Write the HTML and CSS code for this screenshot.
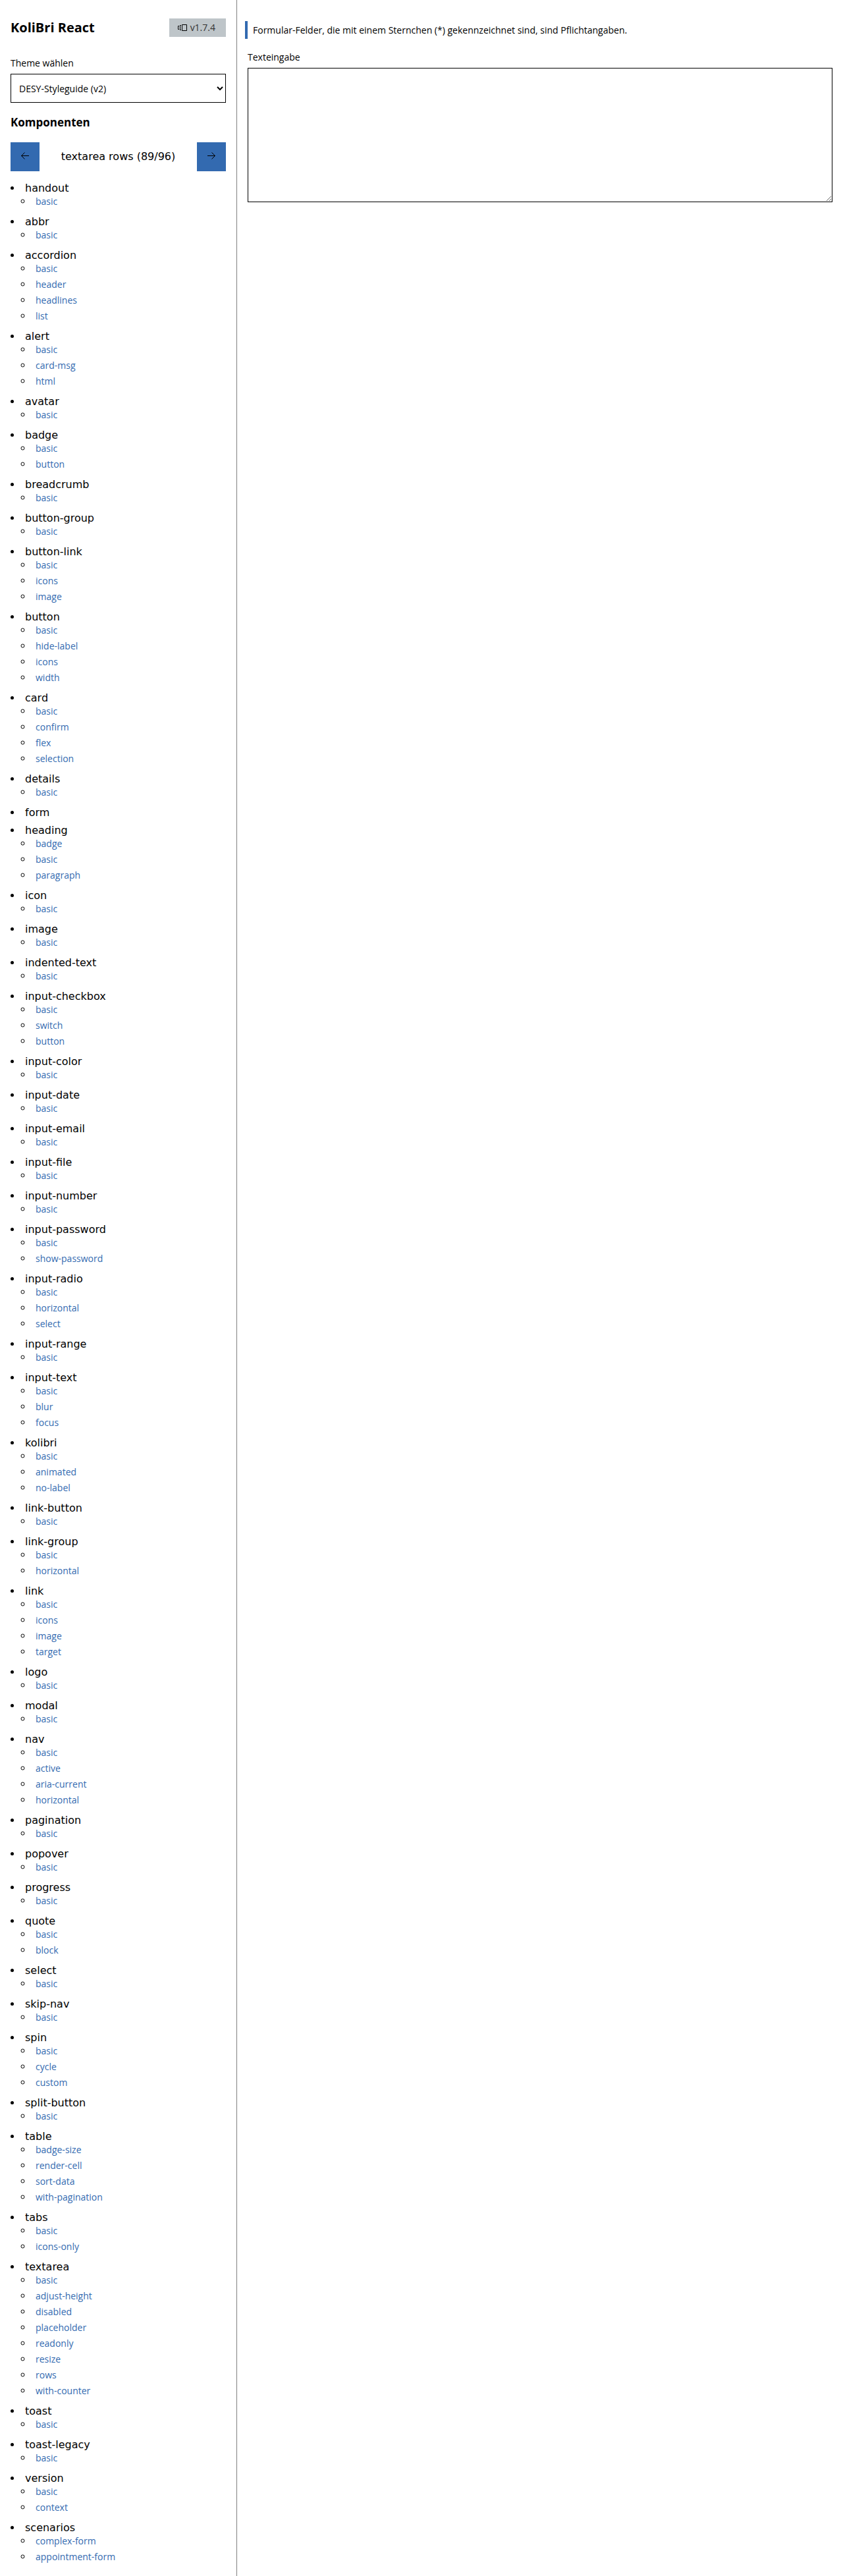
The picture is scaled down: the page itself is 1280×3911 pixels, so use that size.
FILE: index.html
```html
<!DOCTYPE html>
<html lang="de">
<head>
<meta charset="utf-8">
<meta name="viewport" content="width=device-width, initial-scale=1">
<title>KoliBri React</title>
<link rel="stylesheet" href="styles.css">
</head>
<body>
<div class="app">
<aside class="sidebar">
  <header class="brand">
    <h1 class="brand-title">KoliBri React</h1>
    <span class="badge">
      <svg class="icon" viewBox="0 0 16 16" aria-hidden="true"><path d="M7.5 3.5h7v9h-7zM6 4.500H4.500v7H6M3 5.500H1.500v5H3"/></svg>
      v1.7.4
    </span>
  </header>
  <div class="field">
    <label class="label" for="theme">Theme wählen</label>
    <select class="select" id="theme"><option>DESY-Styleguide (v2)</option></select>
  </div>
  <h2 class="section-title">Komponenten</h2>
  <div class="pager">
    <button class="pager-button" type="button" aria-label="Zurück"><svg class="icon" viewBox="0 0 16 16" aria-hidden="true"><path d="M14 8.500H2.500M7.500 3.500l-5 5 5 5"/></svg></button>
    <span class="pager-text">textarea rows (89/96)</span>
    <button class="pager-button" type="button" aria-label="Weiter"><svg class="icon" viewBox="0 0 16 16" aria-hidden="true"><path d="M2 8.500h11.500M8.500 3.500l5 5-5 5"/></svg></button>
  </div>
  <nav aria-label="Komponenten">
  <ul class="groups">
    <li>handout<ul><li><a href="#">basic</a></li></ul></li>
    <li>abbr<ul><li><a href="#">basic</a></li></ul></li>
    <li>accordion<ul><li><a href="#">basic</a></li><li><a href="#">header</a></li><li><a href="#">headlines</a></li><li><a href="#">list</a></li></ul></li>
    <li>alert<ul><li><a href="#">basic</a></li><li><a href="#">card-msg</a></li><li><a href="#">html</a></li></ul></li>
    <li>avatar<ul><li><a href="#">basic</a></li></ul></li>
    <li>badge<ul><li><a href="#">basic</a></li><li><a href="#">button</a></li></ul></li>
    <li>breadcrumb<ul><li><a href="#">basic</a></li></ul></li>
    <li>button-group<ul><li><a href="#">basic</a></li></ul></li>
    <li>button-link<ul><li><a href="#">basic</a></li><li><a href="#">icons</a></li><li><a href="#">image</a></li></ul></li>
    <li>button<ul><li><a href="#">basic</a></li><li><a href="#">hide-label</a></li><li><a href="#">icons</a></li><li><a href="#">width</a></li></ul></li>
    <li>card<ul><li><a href="#">basic</a></li><li><a href="#">confirm</a></li><li><a href="#">flex</a></li><li><a href="#">selection</a></li></ul></li>
    <li>details<ul><li><a href="#">basic</a></li></ul></li>
    <li>form</li>
    <li>heading<ul><li><a href="#">badge</a></li><li><a href="#">basic</a></li><li><a href="#">paragraph</a></li></ul></li>
    <li>icon<ul><li><a href="#">basic</a></li></ul></li>
    <li>image<ul><li><a href="#">basic</a></li></ul></li>
    <li>indented-text<ul><li><a href="#">basic</a></li></ul></li>
    <li>input-checkbox<ul><li><a href="#">basic</a></li><li><a href="#">switch</a></li><li><a href="#">button</a></li></ul></li>
    <li>input-color<ul><li><a href="#">basic</a></li></ul></li>
    <li>input-date<ul><li><a href="#">basic</a></li></ul></li>
    <li>input-email<ul><li><a href="#">basic</a></li></ul></li>
    <li>input-file<ul><li><a href="#">basic</a></li></ul></li>
    <li>input-number<ul><li><a href="#">basic</a></li></ul></li>
    <li>input-password<ul><li><a href="#">basic</a></li><li><a href="#">show-password</a></li></ul></li>
    <li>input-radio<ul><li><a href="#">basic</a></li><li><a href="#">horizontal</a></li><li><a href="#">select</a></li></ul></li>
    <li>input-range<ul><li><a href="#">basic</a></li></ul></li>
    <li>input-text<ul><li><a href="#">basic</a></li><li><a href="#">blur</a></li><li><a href="#">focus</a></li></ul></li>
    <li>kolibri<ul><li><a href="#">basic</a></li><li><a href="#">animated</a></li><li><a href="#">no-label</a></li></ul></li>
    <li>link-button<ul><li><a href="#">basic</a></li></ul></li>
    <li>link-group<ul><li><a href="#">basic</a></li><li><a href="#">horizontal</a></li></ul></li>
    <li>link<ul><li><a href="#">basic</a></li><li><a href="#">icons</a></li><li><a href="#">image</a></li><li><a href="#">target</a></li></ul></li>
    <li>logo<ul><li><a href="#">basic</a></li></ul></li>
    <li>modal<ul><li><a href="#">basic</a></li></ul></li>
    <li>nav<ul><li><a href="#">basic</a></li><li><a href="#">active</a></li><li><a href="#">aria-current</a></li><li><a href="#">horizontal</a></li></ul></li>
    <li>pagination<ul><li><a href="#">basic</a></li></ul></li>
    <li>popover<ul><li><a href="#">basic</a></li></ul></li>
    <li>progress<ul><li><a href="#">basic</a></li></ul></li>
    <li>quote<ul><li><a href="#">basic</a></li><li><a href="#">block</a></li></ul></li>
    <li>select<ul><li><a href="#">basic</a></li></ul></li>
    <li>skip-nav<ul><li><a href="#">basic</a></li></ul></li>
    <li>spin<ul><li><a href="#">basic</a></li><li><a href="#">cycle</a></li><li><a href="#">custom</a></li></ul></li>
    <li>split-button<ul><li><a href="#">basic</a></li></ul></li>
    <li>table<ul><li><a href="#">badge-size</a></li><li><a href="#">render-cell</a></li><li><a href="#">sort-data</a></li><li><a href="#">with-pagination</a></li></ul></li>
    <li>tabs<ul><li><a href="#">basic</a></li><li><a href="#">icons-only</a></li></ul></li>
    <li>textarea<ul><li><a href="#">basic</a></li><li><a href="#">adjust-height</a></li><li><a href="#">disabled</a></li><li><a href="#">placeholder</a></li><li><a href="#">readonly</a></li><li><a href="#">resize</a></li><li><a href="#">rows</a></li><li><a href="#">with-counter</a></li></ul></li>
    <li>toast<ul><li><a href="#">basic</a></li></ul></li>
    <li>toast-legacy<ul><li><a href="#">basic</a></li></ul></li>
    <li>version<ul><li><a href="#">basic</a></li><li><a href="#">context</a></li></ul></li>
    <li>scenarios<ul><li><a href="#">complex-form</a></li><li><a href="#">appointment-form</a></li></ul></li>
  </ul>
  </nav>
</aside>
<main class="content">
  <p class="hint">Formular-Felder, die mit einem Sternchen (*) gekennzeichnet sind, sind Pflichtangaben.</p>
  <div class="field content-field">
    <label class="label" for="text">Texteingabe</label>
    <textarea class="textarea" id="text" rows="8"></textarea>
  </div>
</main>
</div>
</body>
</html>
```
FILE: styles.css
```css
*, *::before, *::after { box-sizing: border-box; }

body {
  margin: 0;
  background: #fff;
  color: #000;
  font: 14px/24px "Open Sans", "Noto Sans", sans-serif;
}

h1, h2, p, ul { margin: 0; padding: 0; }

.app {
  display: grid;
  grid-template-columns: 360px minmax(0, 1fr);
  min-height: 100vh;
}

.sidebar {
  display: flex;
  flex-direction: column;
  gap: 16px;
  padding: 16px 16px 8px;
  border-right: 1px solid #808080;
}

.brand {
  display: flex;
  align-items: center;
  justify-content: space-between;
  min-height: 52px;
}

.brand-title { font-size: 20px; line-height: 28px; }
.section-title { font-size: 17px; line-height: 28px; }

.badge {
  display: flex;
  align-items: center;
  gap: 4px;
  padding: 2px 16px 2px 12px;
  background: #bec5c9;
  color: #333;
}

.icon {
  width: 16px;
  height: 16px;
  fill: none;
  stroke: #000;
}

.field {
  display: flex;
  flex-direction: column;
  gap: 4px;
}

.select, .textarea {
  width: 100%;
  border: 1px solid #000;
  border-radius: 0;
  background: #fff;
  color: #000;
  font: inherit;
}

.select { height: 44px; padding: 0 0 0 8px; }
.textarea { display: block; padding: 5px 8px; }

.pager {
  display: flex;
  align-items: center;
  justify-content: space-between;
  font: 16px/24px "DejaVu Sans", sans-serif;
}

.pager-button {
  display: flex;
  align-items: center;
  justify-content: center;
  width: 44px;
  height: 44px;
  padding: 0 0 4px;
  border: 0;
  background: #336ab0;
}

.groups {
  font: 16px/19px "DejaVu Sans", sans-serif;
  list-style: disc inside;
}

.groups > li { padding-bottom: 8px; }

.groups ul {
  padding-left: 16px;
  line-height: 22px;
  list-style: circle inside;
}

.groups ul li { padding-bottom: 2px; }

.groups a {
  color: #336ab0;
  font-family: "Open Sans", "Noto Sans", sans-serif;
  font-size: 14px;
  text-decoration: none;
}

.content {
  display: flex;
  flex-direction: column;
  gap: 16px;
  padding: 32px 16px 16px 12px;
}

.hint {
  padding-left: 8px;
  border-left: 4px solid #336ab0;
  line-height: 27px;
}

.content-field { padding-left: 4px; }
```
